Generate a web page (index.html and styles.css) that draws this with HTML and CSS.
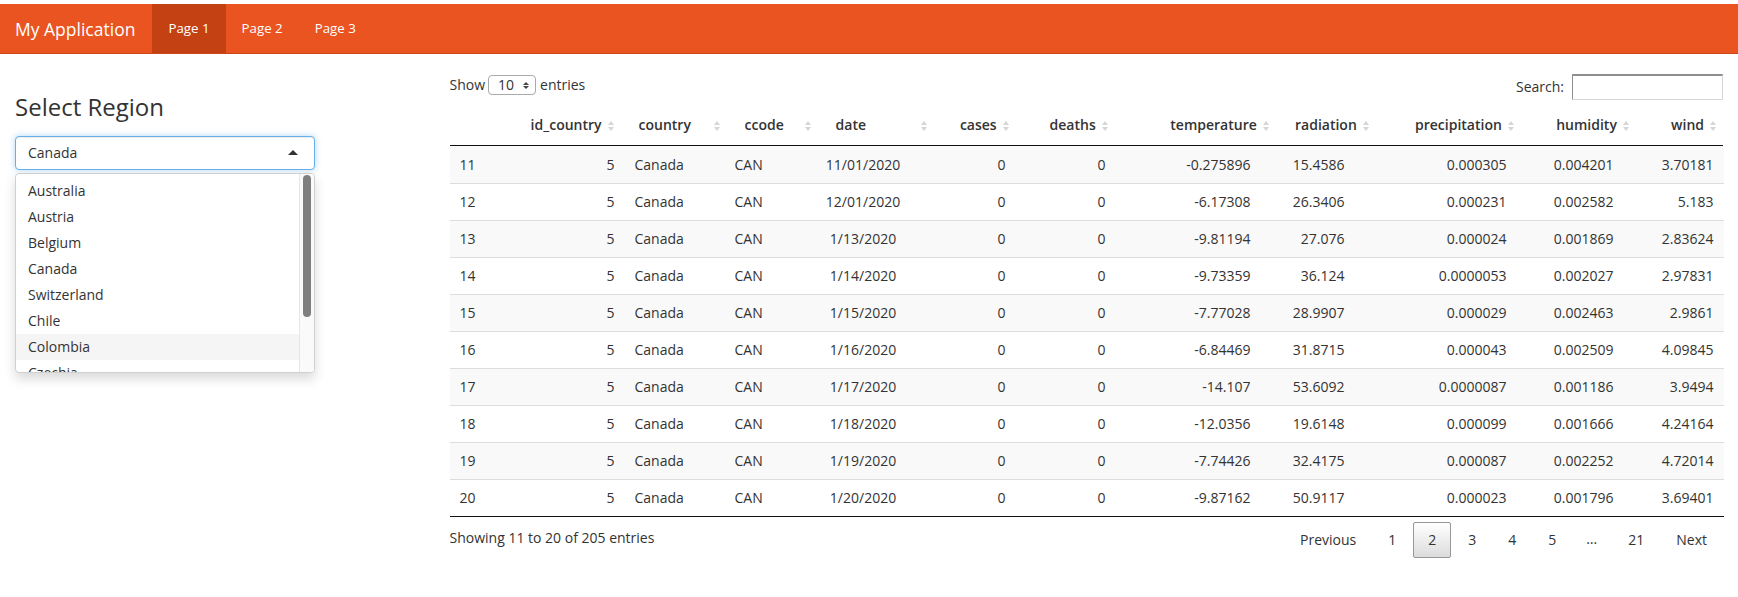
FILE: index.html
```html
<!DOCTYPE html>
<html lang="en">
<head>
<meta charset="utf-8">
<title>My Application</title>
<link rel="stylesheet" href="styles.css">
</head>
<body>
<nav class="navbar">
  <div class="brand">My Application</div>
  <ul class="nav">
    <li class="active">Page 1</li>
    <li>Page 2</li>
    <li>Page 3</li>
  </ul>
</nav>
<div class="page">
  <aside class="sidebar">
    <h3 class="region-title">Select Region</h3>
    <div class="selectize">
      <div class="sel-input"><span>Canada</span><span class="caret-up"></span></div>
      <div class="sel-dropdown">
        <div class="sel-options">
          <div class="opt">Australia</div>
          <div class="opt">Austria</div>
          <div class="opt">Belgium</div>
          <div class="opt">Canada</div>
          <div class="opt">Switzerland</div>
          <div class="opt">Chile</div>
          <div class="opt hover">Colombia</div>
          <div class="opt">Czechia</div>
        </div>
        <div class="sel-scroll"><div class="sel-thumb"></div></div>
      </div>
    </div>
  </aside>
  <main class="main">
    <div class="dt-top">
      <div class="dt-length">Show <span class="len-select"><span>10</span><span class="updown"></span></span> entries</div>
      <div class="dt-filter">Search: <span class="search-input"></span></div>
    </div>
    <table class="dt dt-head">
      <colgroup>
        <col style="width:70px"><col style="width:101px"><col style="width:106px"><col style="width:91px"><col style="width:116px"><col style="width:82px"><col style="width:99px"><col style="width:161px"><col style="width:100px"><col style="width:145px"><col style="width:115px"><col style="width:87px">
      </colgroup>
      <thead>
        <tr>
          <th class="rn"></th>
          <th class="r"><div class="thc"><span>id_country</span><span class="sort"></span></div></th>
          <th><div class="thc"><span>country</span><span class="sort"></span></div></th>
          <th><div class="thc"><span>ccode</span><span class="sort"></span></div></th>
          <th><div class="thc"><span>date</span><span class="sort"></span></div></th>
          <th class="r"><div class="thc"><span>cases</span><span class="sort"></span></div></th>
          <th class="r"><div class="thc"><span>deaths</span><span class="sort"></span></div></th>
          <th class="r"><div class="thc"><span>temperature</span><span class="sort"></span></div></th>
          <th class="r"><div class="thc"><span>radiation</span><span class="sort"></span></div></th>
          <th class="r"><div class="thc"><span>precipitation</span><span class="sort"></span></div></th>
          <th class="r"><div class="thc"><span>humidity</span><span class="sort"></span></div></th>
          <th class="r"><div class="thc"><span>wind</span><span class="sort"></span></div></th>
        </tr>
      </thead>
    </table>
    <table class="dt dt-body">
      <colgroup>
        <col style="width:70px"><col style="width:105px"><col style="width:100px"><col style="width:91px"><col style="width:95px"><col style="width:105px"><col style="width:100px"><col style="width:145px"><col style="width:94px"><col style="width:162px"><col style="width:107px"><col style="width:100px">
      </colgroup>
      <tbody>
        <tr><td>11</td><td class="r">5</td><td>Canada</td><td>CAN</td><td class="c">11/01/2020</td><td class="r">0</td><td class="r">0</td><td class="r">-0.275896</td><td class="r">15.4586</td><td class="r">0.000305</td><td class="r">0.004201</td><td class="r">3.70181</td></tr>
        <tr><td>12</td><td class="r">5</td><td>Canada</td><td>CAN</td><td class="c">12/01/2020</td><td class="r">0</td><td class="r">0</td><td class="r">-6.17308</td><td class="r">26.3406</td><td class="r">0.000231</td><td class="r">0.002582</td><td class="r">5.183</td></tr>
        <tr><td>13</td><td class="r">5</td><td>Canada</td><td>CAN</td><td class="c">1/13/2020</td><td class="r">0</td><td class="r">0</td><td class="r">-9.81194</td><td class="r">27.076</td><td class="r">0.000024</td><td class="r">0.001869</td><td class="r">2.83624</td></tr>
        <tr><td>14</td><td class="r">5</td><td>Canada</td><td>CAN</td><td class="c">1/14/2020</td><td class="r">0</td><td class="r">0</td><td class="r">-9.73359</td><td class="r">36.124</td><td class="r">0.0000053</td><td class="r">0.002027</td><td class="r">2.97831</td></tr>
        <tr><td>15</td><td class="r">5</td><td>Canada</td><td>CAN</td><td class="c">1/15/2020</td><td class="r">0</td><td class="r">0</td><td class="r">-7.77028</td><td class="r">28.9907</td><td class="r">0.000029</td><td class="r">0.002463</td><td class="r">2.9861</td></tr>
        <tr><td>16</td><td class="r">5</td><td>Canada</td><td>CAN</td><td class="c">1/16/2020</td><td class="r">0</td><td class="r">0</td><td class="r">-6.84469</td><td class="r">31.8715</td><td class="r">0.000043</td><td class="r">0.002509</td><td class="r">4.09845</td></tr>
        <tr><td>17</td><td class="r">5</td><td>Canada</td><td>CAN</td><td class="c">1/17/2020</td><td class="r">0</td><td class="r">0</td><td class="r">-14.107</td><td class="r">53.6092</td><td class="r">0.0000087</td><td class="r">0.001186</td><td class="r">3.9494</td></tr>
        <tr><td>18</td><td class="r">5</td><td>Canada</td><td>CAN</td><td class="c">1/18/2020</td><td class="r">0</td><td class="r">0</td><td class="r">-12.0356</td><td class="r">19.6148</td><td class="r">0.000099</td><td class="r">0.001666</td><td class="r">4.24164</td></tr>
        <tr><td>19</td><td class="r">5</td><td>Canada</td><td>CAN</td><td class="c">1/19/2020</td><td class="r">0</td><td class="r">0</td><td class="r">-7.74426</td><td class="r">32.4175</td><td class="r">0.000087</td><td class="r">0.002252</td><td class="r">4.72014</td></tr>
        <tr><td>20</td><td class="r">5</td><td>Canada</td><td>CAN</td><td class="c">1/20/2020</td><td class="r">0</td><td class="r">0</td><td class="r">-9.87162</td><td class="r">50.9117</td><td class="r">0.000023</td><td class="r">0.001796</td><td class="r">3.69401</td></tr>
      </tbody>
    </table>
    <div class="dt-bottom">
      <div class="dt-info">Showing 11 to 20 of 205 entries</div>
      <div class="dt-paginate">
        <span class="pbtn">Previous</span>
        <span class="pbtn">1</span>
        <span class="pbtn current">2</span>
        <span class="pbtn">3</span>
        <span class="pbtn">4</span>
        <span class="pbtn">5</span>
        <span class="ellipsis">…</span>
        <span class="pbtn">21</span>
        <span class="pbtn">Next</span>
      </div>
    </div>
  </main>
</div>
</body>
</html>
```
FILE: styles.css
```css
* { box-sizing: border-box; }

body {
  margin: 0;
  padding-top: 4px;
  font-family: "Open Sans", "Noto Sans", sans-serif;
  font-size: 14px;
  line-height: 20px;
  color: #333;
  background: #fff;
}

/* Navbar */
.navbar {
  display: flex;
  height: 50px;
  background: #e95420;
  border-bottom: 1px solid #c9461a;
  color: #fff;
}
.brand {
  font-size: 17.5px;
  line-height: 20px;
  padding: 15px 17px 15px 15px;
}
.nav {
  display: flex;
  list-style: none;
  margin: 0;
  padding: 0;
}
.nav li {
  padding: 15px 16px;
  line-height: 19px;
  font-size: 13.3px;
}
.nav li.active { background: #c34113; }

/* Page grid */
.page {
  display: grid;
  grid-template-columns: 25% 75%;
  margin-top: 20px;
}
.sidebar, .main { padding: 0 15px; min-width: 0; }

/* Sidebar */
.region-title {
  margin: 20px 0 16px;
  font-size: 24px;
  line-height: 26px;
  font-weight: 400;
  color: #333;
}
.selectize {
  position: relative;
  width: 300px;
}
.sel-input {
  height: 34px;
  border: 1px solid #66afe9;
  border-radius: 4px;
  padding: 6px 12px;
  display: flex;
  justify-content: space-between;
  align-items: center;
  box-shadow: inset 0 1px 1px rgba(0,0,0,.075), 0 0 6px rgba(102,175,233,.5);
  background: #fff;
}
.caret-up {
  width: 0; height: 0;
  border-left: 5px solid transparent;
  border-right: 5px solid transparent;
  border-bottom: 5px solid #333;
  margin-right: 4px;
  margin-top: -2px;
}
.sel-dropdown {
  position: absolute;
  top: 37px;
  left: 0;
  width: 300px;
  height: 200px;
  display: flex;
  background: #fff;
  border: 1px solid #d0d0d0;
  border-radius: 4px;
  box-shadow: 0 6px 12px rgba(0,0,0,.15);
  overflow: hidden;
  z-index: 10;
}
.sel-options {
  flex: 1;
  padding: 4px 0;
  overflow: hidden;
}
.opt {
  padding: 3px 12px;
  line-height: 20px;
}
.opt.hover { background: #f5f5f5; }
.sel-scroll {
  width: 15px;
  flex: none;
  background: #fafafa;
  border-left: 1px solid #e6e6e6;
  padding: 1px 3px 0 3px;
}
.sel-thumb {
  height: 142px;
  border-radius: 5px;
  background: #7f7f7f;
}

/* DataTable */
.dt-top {
  display: flex;
  justify-content: space-between;
  align-items: flex-start;
  height: 27px;
  padding-top: 1px;
  margin-bottom: 4px;
}
.dt-length {
  display: flex;
  align-items: center;
  gap: 3px;
  line-height: 20px;
}
.len-select {
  display: inline-flex;
  align-items: center;
  justify-content: space-between;
  width: 48px;
  height: 20px;
  border: 1px solid #aaa;
  border-radius: 4px;
  padding: 0 6px 0 9px;
  margin-right: 1px;
}
.updown {
  display: inline-flex;
  flex-direction: column;
  gap: 1px;
}
.updown::before, .updown::after {
  content: "";
  width: 0; height: 0;
  border-left: 3px solid transparent;
  border-right: 3px solid transparent;
}
.updown::before { border-bottom: 3px solid #444; }
.updown::after { border-top: 3px solid #444; }
.dt-filter {
  display: flex;
  align-items: center;
  gap: 8px;
  margin-top: -1px;
  height: 26px;
}
.search-input {
  width: 151px;
  height: 26px;
  border: 1px solid #d6d6d6;
  border-top: 2px solid #8f8f8f;
  border-left: 1px solid #8f8f8f;
  background: #fff;
}

.dt {
  width: 100%;
  border-collapse: collapse;
  table-layout: fixed;
}
.dt-head th {
  padding: 10px 7px 10px 18px;
  font-weight: 600;
  text-align: left;
  border-bottom: 1px solid #111;
  white-space: nowrap;
}
.thc {
  display: flex;
  align-items: center;
  justify-content: space-between;
}
th.r .thc {
  justify-content: flex-end;
  gap: 6px;
}
.sort {
  display: inline-flex;
  flex-direction: column;
  gap: 2px;
  flex: none;
  margin-top: 1px;
}
.sort::before, .sort::after {
  content: "";
  width: 0; height: 0;
  border-left: 3px solid transparent;
  border-right: 3px solid transparent;
}
.sort::before { border-bottom: 4px solid #d6d6d6; }
.sort::after { border-top: 4px solid #d6d6d6; }

.dt-body { border-bottom: 1px solid #111; }
.dt-body td {
  padding: 8px 10px;
  border-top: 1px solid #ddd;
  white-space: nowrap;
}
.dt-body tr:first-child td { border-top: none; padding-top: 9px; }
.dt-body tr:nth-child(odd) { background: #f9f9f9; }
.dt-body td.r { text-align: right; }
.dt-body td.c { text-align: center; }

.dt-bottom {
  display: flex;
  justify-content: space-between;
  align-items: flex-start;
}
.dt-info { padding-top: 11px; }
.dt-paginate {
  display: flex;
  padding-top: 5px;
  margin-right: 1px;
}
.pbtn {
  min-width: 21px;
  padding: 7px 14px;
  margin-left: 2px;
  text-align: center;
  border: 1px solid transparent;
  border-radius: 2px;
  line-height: 20px;
}
.pbtn.current {
  border-color: #979797;
  background: linear-gradient(to bottom, #fff 0%, #dcdcdc 100%);
}
.ellipsis {
  padding: 7px 13px;
  margin-left: 2px;
  line-height: 20px;
  letter-spacing: 1px;
}
```
